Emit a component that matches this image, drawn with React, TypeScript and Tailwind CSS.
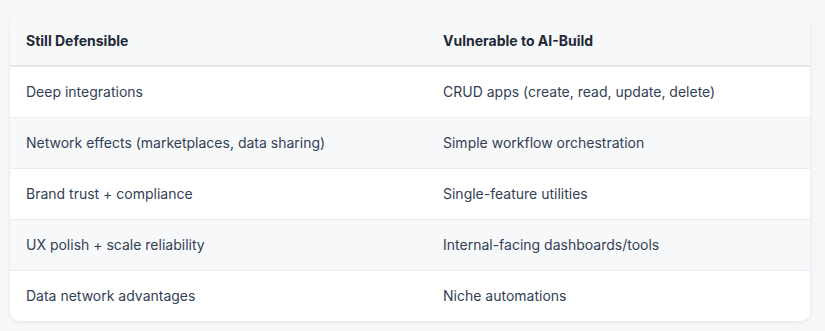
import React from 'react';

const rows = [
    ["Deep integrations", "CRUD apps (create, read, update, delete)"],
    ["Network effects (marketplaces, data sharing)", "Simple workflow orchestration"],
    ["Brand trust + compliance", "Single-feature utilities"],
    ["UX polish + scale reliability", "Internal-facing dashboards/tools"],
    ["Data network advantages", "Niche automations"],
];

const App: React.FC = () => {
    return (
        <div className="min-h-screen bg-[#f6f7f9] px-[10px] pt-[15px] pb-[10px]" style={{ fontFamily: 'Inter, "Noto Sans", sans-serif' }}>
            <div className="w-[800px] bg-white rounded-[10px] overflow-hidden shadow-[0_1px_4px_rgba(15,23,42,0.08)]">
                <table className="w-full border-collapse text-[14px]">
                    <thead>
                        <tr className="bg-[#f7f8fa] border-b-2 border-[#e5e7eb]">
                            <th className="w-[417px] h-[51px] px-4 text-left font-bold text-[#1f2937]">Still Defensible</th>
                            <th className="h-[51px] px-4 text-left font-bold text-[#1f2937]">Vulnerable to AI-Build</th>
                        </tr>
                    </thead>
                    <tbody>
                        {rows.map((r, i) => (
                            <tr key={i} className={(i % 2 === 1 ? "bg-[#f7f8fa] " : "bg-white ") + (i < rows.length - 1 ? "border-b border-[#e8ebef]" : "")}>
                                <td className="h-[51px] px-4 text-[#334155]">{r[0]}</td>
                                <td className="h-[51px] px-4 text-[#334155]">{r[1]}</td>
                            </tr>
                        ))}
                    </tbody>
                </table>
            </div>
        </div>
    );
};

export default App;
